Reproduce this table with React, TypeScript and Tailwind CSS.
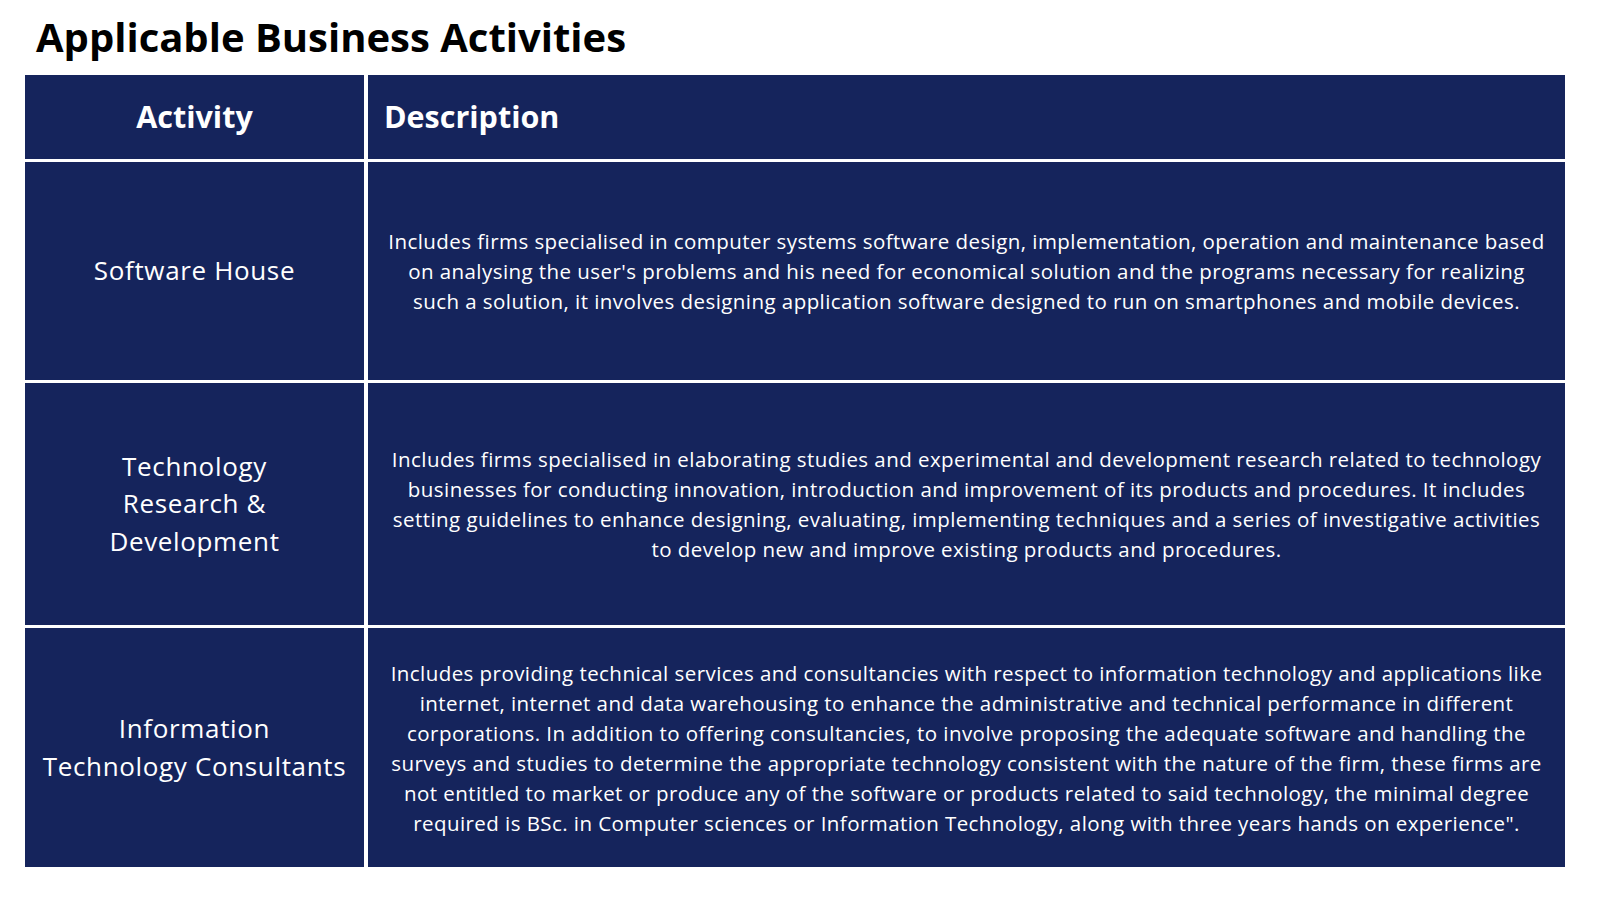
import React from "react";

const rows = [
  {
    activity: ["Software House"],
    desc: [
      "Includes firms specialised in computer systems software design, implementation, operation and maintenance based",
      "on analysing the user's problems and his need for economical solution and the programs necessary for realizing",
      "such a solution, it involves designing application software designed to run on smartphones and mobile devices.",
    ],
    h: "h-[218px]",
  },
  {
    activity: ["Technology", "Research &", "Development"],
    desc: [
      "Includes firms specialised in elaborating studies and experimental and development research related to technology",
      "businesses for conducting innovation, introduction and improvement of its products and procedures. It includes",
      "setting guidelines to enhance designing, evaluating, implementing techniques and a series of investigative activities",
      "to develop new and improve existing products and procedures.",
    ],
    h: "h-[242px]",
  },
  {
    activity: ["Information", "Technology Consultants"],
    desc: [
      "Includes providing technical services and consultancies with respect to information technology and applications like",
      "internet, internet and data warehousing to enhance the administrative and technical performance in different",
      "corporations. In addition to offering consultancies, to involve proposing the adequate software and handling the",
      "surveys and studies to determine the appropriate technology consistent with the nature of the firm, these firms are",
      "not entitled to market or produce any of the software or products related to said technology, the minimal degree",
      "required is BSc. in Computer sciences or Information Technology, along with three years hands on experience\".",
    ],
    h: "h-[239px]",
  },
];

export default function App() {
  return (
    <div className="w-[1600px] h-[900px] bg-white overflow-hidden" style={{ fontFamily: "'Open Sans', 'Noto Sans', sans-serif" }}>
      <h1 className="pl-[36px] pt-[10px] h-[75px] text-[40px] font-bold text-black leading-[54px]">
        Applicable Business Activities
      </h1>
      <div className="ml-[25px] w-[1540px] grid grid-cols-[339px_1fr] gap-x-[4px] gap-y-[3px] bg-white">
        <div className="h-[84px] bg-[#15245c] flex items-center justify-center text-white text-[30.5px] font-bold">
          Activity
        </div>
        <div className="h-[84px] bg-[#15245c] flex items-center pl-[16px] text-white text-[30.5px] font-bold">
          Description
        </div>
        {rows.map((r, i) => (
          <React.Fragment key={i}>
            <div className={`${r.h} bg-[#15245c] flex flex-col items-center justify-center text-white text-[26px] tracking-[0.65px] leading-[37.5px] text-center`}>
              {r.activity.map((a, j) => (
                <div key={j}>{a}</div>
              ))}
            </div>
            <div className={`${r.h} bg-[#15245c] flex flex-col items-center justify-center text-white text-[20.5px] tracking-[0.44px] leading-[30px] text-center whitespace-nowrap`}>
              {r.desc.map((d, j) => (
                <div key={j}>{d}</div>
              ))}
            </div>
          </React.Fragment>
        ))}
      </div>
    </div>
  );
}
